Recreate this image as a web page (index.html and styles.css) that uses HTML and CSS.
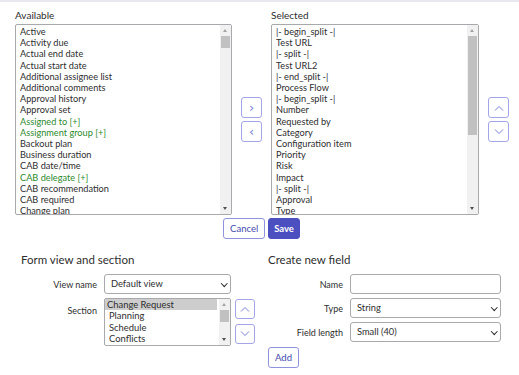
FILE: index.html
```html
<!DOCTYPE html>
<html lang="en">
<head>
    <meta charset="UTF-8">
    <title>Configure form layout</title>
    <link rel="stylesheet" href="styles.css">
</head>
<body>
    <div class="page">
        <div class="slush">
            <div class="bucket">
                <div class="bucket-label">Available</div>
                <div class="listbox tall">
                    <div class="items">
                        <div>Active</div>
                        <div>Activity due</div>
                        <div>Actual end date</div>
                        <div>Actual start date</div>
                        <div>Additional assignee list</div>
                        <div>Additional comments</div>
                        <div>Approval history</div>
                        <div>Approval set</div>
                        <div class="ref">Assigned to [+]</div>
                        <div class="ref">Assignment group [+]</div>
                        <div>Backout plan</div>
                        <div>Business duration</div>
                        <div>CAB date/time</div>
                        <div class="ref">CAB delegate [+]</div>
                        <div>CAB recommendation</div>
                        <div>CAB required</div>
                        <div>Change plan</div>
                    </div>
                    <div class="scrollbar">
                        <span class="sb-up"></span>
                        <div class="sb-track"><div class="sb-thumb small"></div></div>
                        <span class="sb-down"></span>
                    </div>
                </div>
            </div>

            <div class="arrows">
                <button class="icon-btn">&#x203A;</button>
                <button class="icon-btn">&#x2039;</button>
            </div>

            <div class="bucket selected">
                <div class="bucket-label">Selected</div>
                <div class="listbox tall">
                    <div class="items">
                        <div>|- begin_split -|</div>
                        <div>Test URL</div>
                        <div>|- split -|</div>
                        <div>Test URL2</div>
                        <div>|- end_split -|</div>
                        <div>Process Flow</div>
                        <div>|- begin_split -|</div>
                        <div>Number</div>
                        <div>Requested by</div>
                        <div>Category</div>
                        <div>Configuration item</div>
                        <div>Priority</div>
                        <div>Risk</div>
                        <div>Impact</div>
                        <div>|- split -|</div>
                        <div>Approval</div>
                        <div>Type</div>
                    </div>
                    <div class="scrollbar">
                        <span class="sb-up"></span>
                        <div class="sb-track"><div class="sb-thumb big"></div></div>
                        <span class="sb-down"></span>
                    </div>
                </div>
            </div>

            <div class="arrows">
                <button class="icon-btn"><svg width="10" height="6" viewBox="0 0 10 6"><path d="M1 5.5 L5 1.5 L9 5.5" fill="none" stroke="#7b7fd6" stroke-width="1"/></svg></button>
                <button class="icon-btn"><svg width="10" height="6" viewBox="0 0 10 6"><path d="M1 0.5 L5 4.5 L9 0.5" fill="none" stroke="#7b7fd6" stroke-width="1"/></svg></button>
            </div>
        </div>

        <div class="actions">
            <button class="btn">Cancel</button>
            <button class="btn primary">Save</button>
        </div>

        <div class="bottom">
            <div class="panel left">
                <h3>Form view and section</h3>
                <div class="form-grid">
                    <label>View name</label>
                    <div class="select">Default view</div>

                    <label class="top">Section</label>
                    <div class="section-row">
                        <div class="listbox short">
                            <div class="items">
                                <div class="active">Change Request</div>
                                <div>Planning</div>
                                <div>Schedule</div>
                                <div>Conflicts</div>
                            </div>
                            <div class="scrollbar">
                                <span class="sb-up"></span>
                                <div class="sb-track"><div class="sb-thumb tiny"></div></div>
                                <span class="sb-down"></span>
                            </div>
                        </div>
                        <div class="arrows small">
                            <button class="icon-btn"><svg width="10" height="6" viewBox="0 0 10 6"><path d="M1 5.5 L5 1.5 L9 5.5" fill="none" stroke="#7b7fd6" stroke-width="1"/></svg></button>
                            <button class="icon-btn"><svg width="10" height="6" viewBox="0 0 10 6"><path d="M1 0.5 L5 4.5 L9 0.5" fill="none" stroke="#7b7fd6" stroke-width="1"/></svg></button>
                        </div>
                    </div>
                </div>
            </div>

            <div class="panel right">
                <h3>Create new field</h3>
                <div class="form-grid">
                    <label>Name</label>
                    <div class="input"></div>

                    <label>Type</label>
                    <div class="select wide">String</div>

                    <label>Field length</label>
                    <div class="select wide">Small (40)</div>
                </div>
                <button class="btn add">Add</button>
            </div>
        </div>
    </div>
</body>
</html>
```

FILE: styles.css
```css
body {
    margin: 0;
    font-family: Lato, "Open Sans", sans-serif;
    color: #2e2e2e;
    background: #fff;
    border-top: 2px solid #e8e8ee;
}
.page {
    padding: 7px 0 0 15px;
}
.slush {
    display: flex;
    align-items: flex-start;
}
.slush > * {
    flex-shrink: 0;
}
.bucket {
    width: 217px;
}
.bucket.selected {
    width: 208px;
}
.bucket-label {
    font-size: 10px;
    height: 15px;
    line-height: 13px;
}
.listbox {
    display: flex;
    border: 1px solid #a9a9ad;
    border-radius: 2px;
    overflow: hidden;
    background: #fff;
}
.listbox.tall {
    height: 189px;
}
.listbox.short {
    width: 125px;
    height: 46px;
}
.items {
    flex: 1;
    overflow: hidden;
    padding: 1px 0 0 4px;
    font-size: 9.2px;
    line-height: 11.2px;
    white-space: nowrap;
}
.items .ref {
    color: #2d8a2d;
}
.listbox.short .items {
    padding: 0 2px;
    font-size: 9.4px;
    line-height: 11.3px;
}
.items .active {
    background: #cdcdcd;
    margin-left: -2px;
}
.listbox.short .items div {
    padding-left: 2px;
}
.scrollbar {
    width: 11px;
    display: flex;
    flex-direction: column;
    background: #f1f1f1;
}
.sb-up, .sb-down {
    height: 11px;
    position: relative;
}
.sb-up::after, .sb-down::after {
    content: "";
    position: absolute;
    left: 3px;
    border-left: 2.5px solid transparent;
    border-right: 2.5px solid transparent;
}
.sb-up::after {
    top: 4px;
    border-bottom: 3px solid #a3a3a3;
}
.sb-down::after {
    top: 4px;
    border-top: 3px solid #505050;
}
.sb-track {
    flex: 1;
    padding: 0 1px;
}
.sb-thumb {
    background: #c1c1c1;
}
.sb-thumb.small { height: 12px; }
.sb-thumb.big { height: 99px; }
.sb-thumb.tiny { height: 12px; }

.arrows {
    display: flex;
    flex-direction: column;
    gap: 3px;
    margin: 88px 9px 0;
}
.arrows.small {
    margin: 1px 0 0 4px;
    gap: 5px;
}
.icon-btn {
    width: 21px;
    height: 21px;
    padding: 0;
    border: 1px solid #a3a5e6;
    border-radius: 3px;
    background: #fff;
    color: #7b7fd6;
    font-family: "DejaVu Sans", sans-serif;
    font-size: 13px;
    line-height: 17px;
    display: flex;
    align-items: center;
    justify-content: center;
}
.arrows.small .icon-btn {
    width: 20px;
    height: 20px;
}
.actions {
    display: flex;
    justify-content: center;
    gap: 3px;
    margin: 3px 0 0 0;
    width: 493px;
}
.btn {
    font-family: Lato, sans-serif;
    font-size: 9.5px;
    height: 21px;
    padding: 0 6px;
    border: 1px solid #8f92dd;
    border-radius: 3px;
    background: #fff;
    color: #4549ad;
}
.btn.primary {
    background: #4c4fbf;
    border-color: #4c4fbf;
    color: #fff;
    font-weight: bold;
    padding: 0 5px;
}
.bottom {
    display: flex;
    margin-top: 14px;
}
.panel.left {
    width: 247px;
    padding-left: 6px;
}
.panel h3 {
    margin: 0 0 7px;
    font-size: 11.5px;
    font-weight: normal;
    line-height: 14px;
}
.form-grid {
    display: grid;
    grid-template-columns: 76px auto;
    column-gap: 7px;
    row-gap: 4px;
    align-items: center;
}
.panel.right .form-grid {
    grid-template-columns: 75px 151px;
}
label {
    font-size: 9px;
    text-align: right;
}
label.top {
    align-self: start;
    margin-top: 7px;
}
.select, .input {
    height: 18px;
    border: 1px solid #a9a9ad;
    border-radius: 3px;
    font-size: 9.3px;
    line-height: 18px;
    padding-left: 6px;
    position: relative;
    box-sizing: content-box;
}
.left .select {
    width: 119px;
}
.input {
    padding-left: 0;
}
.select::after {
    content: "";
    position: absolute;
    right: 4px;
    top: 6px;
    width: 3.5px;
    height: 3.5px;
    border-right: 1.6px solid #222;
    border-bottom: 1.6px solid #222;
    transform: rotate(45deg);
}
.section-row {
    display: flex;
}
.btn.add {
    margin-top: 5px;
    padding: 0 6px;
}
```
